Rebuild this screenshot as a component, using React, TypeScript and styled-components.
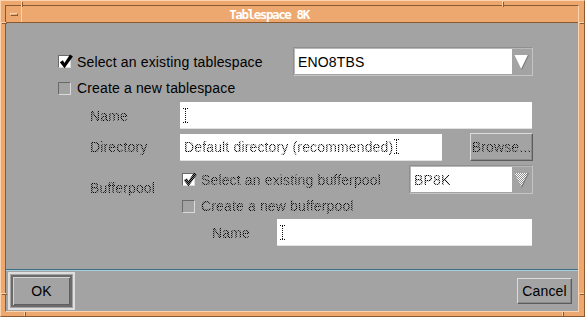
import styled, { createGlobalStyle, css } from "styled-components";

const GlobalStyle = createGlobalStyle`
  html, body {
    margin: 0;
    padding: 0;
    background: #a3a3a3;
  }
  body {
    font-family: "Liberation Sans", Arial, sans-serif;
    font-size: 14px;
    letter-spacing: 0.15px;
    color: #000;
  }
`;

const ORANGE = "#eda870";
const ORANGE_LIGHT = "#fbd3ae";
const ORANGE_DARK = "#8c5a30";
const GRAY = "#a3a3a3";

// Motif draws insensitive text as a 50% stipple
const stipple = css`
  color: transparent;
  background-image: repeating-conic-gradient(#000 0 25%, #959595 0 50%);
  background-size: 2px 2px;
  -webkit-background-clip: text;
  background-clip: text;
`;

const Window = styled.div`
  position: relative;
  width: 585px;
  height: 317px;
  box-sizing: border-box;
  background: ${ORANGE};
  border: 1px solid;
  border-color: ${ORANGE_LIGHT} ${ORANGE_DARK} ${ORANGE_DARK} ${ORANGE_LIGHT};
  padding: 4px 5px 4px 4px;
  display: flex;
`;

const Notch = styled.span<{ $vertical?: boolean }>`
  position: absolute;
  background: ${ORANGE_LIGHT};
  box-shadow: 1px 1px 0 ${ORANGE_DARK};
  width: ${(p) => (p.$vertical ? "1px" : "5px")};
  height: ${(p) => (p.$vertical ? "5px" : "1px")};
`;

const Frame = styled.div`
  flex: 1;
  display: flex;
  flex-direction: column;
  border: 1px solid;
  border-color: ${ORANGE_DARK} ${ORANGE_LIGHT} ${ORANGE_LIGHT} ${ORANGE_DARK};
`;

const TitleBar = styled.div`
  height: 16px;
  display: flex;
  border-bottom: 1px solid ${ORANGE_DARK};
`;

const MenuButton = styled.div`
  width: 15px;
  border-right: 1px solid ${ORANGE_LIGHT};
  display: flex;
  align-items: center;
  justify-content: center;
`;

const MenuBar = styled.span`
  width: 8px;
  height: 3px;
  box-sizing: border-box;
  border: 1px solid;
  border-color: ${ORANGE_LIGHT} ${ORANGE_DARK} ${ORANGE_DARK} ${ORANGE_LIGHT};
`;

const Title = styled.div`
  flex: 1;
  display: flex;
  align-items: center;
  justify-content: center;
  padding-right: 62px;
  font-family: "DejaVu Sans Mono", "Liberation Mono", monospace;
  font-weight: bold;
  font-size: 12.5px;
  letter-spacing: -1.4px;
  color: #fff;
`;

const Body = styled.div`
  flex: 1;
  background: ${GRAY};
  display: flex;
  flex-direction: column;
`;

const Form = styled.div`
  flex: 1;
  padding: 24px 0 0 52px;
  display: flex;
  flex-direction: column;
`;

const Row = styled.div<{ $top?: number; $height?: number; $indent?: number }>`
  display: flex;
  align-items: center;
  margin-top: ${(p) => p.$top ?? 0}px;
  height: ${(p) => (p.$height ? `${p.$height}px` : "auto")};
  padding-left: ${(p) => p.$indent ?? 0}px;
`;

const CheckOption = styled.label<{ $width?: number }>`
  display: flex;
  align-items: center;
  gap: 6px;
  width: ${(p) => (p.$width ? `${p.$width}px` : "auto")};
  white-space: nowrap;
`;

const OptionText = styled.span<{ $disabled?: boolean }>`
  ${(p) => p.$disabled && stipple}
`;

const Box = styled.span<{ $checked?: boolean }>`
  position: relative;
  width: 13px;
  height: 13px;
  box-sizing: border-box;
  border: 1px solid;
  border-color: #6a6a6a #dadada #dadada #6a6a6a;
  background: ${(p) => (p.$checked ? "#fff" : GRAY)};
  flex: none;

  svg {
    position: absolute;
    left: 0;
    top: -2px;
  }
`;

const Label = styled.span<{ $width: number }>`
  width: ${(p) => p.$width}px;
  flex: none;
  ${stipple}
`;

const Field = styled.div<{ $width: number; $height?: number }>`
  width: ${(p) => p.$width}px;
  height: ${(p) => p.$height ?? 27}px;
  box-sizing: border-box;
  background: #fff;
  border-bottom: 1px solid #e2e2e2;
  display: flex;
  align-items: center;
  padding-left: 3px;
  gap: 1px;
  white-space: nowrap;
`;

const FieldText = styled.span`
  padding-left: 1px;
  ${stipple}
  background-image: repeating-conic-gradient(#000 0 25%, #c8c8c8 0 50%);
`;

const Combo = styled.div<{ $width: number }>`
  width: ${(p) => p.$width}px;
  height: 29px;
  box-sizing: border-box;
  border: 1px solid;
  border-color: #8f8f8f #c4c4c4 #c4c4c4 #8f8f8f;
  box-shadow: inset 1px 1px 0 #b8b8b8;
  padding: 1px;
  display: flex;
  background: ${GRAY};
`;

const ComboValue = styled.div<{ $disabled?: boolean }>`
  flex: 1;
  background: #fff;
  display: flex;
  align-items: center;
  padding-left: 3px;

  span {
    ${(p) =>
      p.$disabled &&
      css`
        ${stipple}
        background-image: repeating-conic-gradient(#000 0 25%, #c8c8c8 0 50%);
      `}
  }
`;

const ComboArrow = styled.div`
  width: 19px;
  display: flex;
  align-items: center;
  justify-content: center;
`;

const Group = styled.div`
  display: flex;
  margin-top: 4px;
  padding-left: 32px;
`;

const GroupLabel = styled.div`
  width: 90px;
  height: 46px;
  display: flex;
  align-items: center;
  flex: none;

  span {
    ${stipple}
  }
`;

const GroupBody = styled.div`
  display: flex;
  flex-direction: column;
`;

const PushButton = styled.div<{ $width: number; $height: number; $disabled?: boolean }>`
  width: ${(p) => p.$width}px;
  height: ${(p) => p.$height}px;
  box-sizing: border-box;
  border: 1px solid;
  border-color: #dcdcdc #5c5c5c #5c5c5c #dcdcdc;
  box-shadow: inset -1px -1px 0 #8a8a8a;
  display: flex;
  align-items: center;
  justify-content: center;
  flex: none;

  span {
    ${(p) => p.$disabled && stipple}
  }
`;

const Separator = styled.div`
  border-top: 1px solid #3f6f80;
  border-bottom: 1px solid #a9cfdc;
`;

const Footer = styled.div`
  height: 40px;
  display: flex;
  align-items: center;
  justify-content: space-between;
  padding: 0 6px 0 2px;
`;

const DefaultRing = styled.div`
  width: 67px;
  height: 38px;
  box-sizing: border-box;
  border: 2px solid #dedede;
  padding: 1px;
  display: flex;
`;

const DefaultButton = styled.div`
  flex: 1;
  border: 2px solid #6b6b6b;
  box-shadow: inset 1px 1px 0 #d2d2d2, inset -1px -1px 0 #5e5e5e;
  display: flex;
  align-items: center;
  justify-content: center;
`;

const Spacer = styled.div<{ $width: number }>`
  width: ${(p) => p.$width}px;
  flex: none;
`;

function Checkbox({ checked, disabled, id }: { checked?: boolean; disabled?: boolean; id: string }) {
  return (
    <Box $checked={checked}>
      {checked && (
        <svg width="14" height="15" viewBox="0 0 14 15">
          {disabled && (
            <defs>
              <pattern id={id} width="2" height="2" patternUnits="userSpaceOnUse">
                <rect width="2" height="2" fill="#777" />
                <rect width="1" height="1" fill="#000" />
                <rect x="1" y="1" width="1" height="1" fill="#000" />
              </pattern>
            </defs>
          )}
          <path
            d="M0.8 8.3 L3.9 6.2 L5.4 8.9 L11 0.6 L13.9 2.4 L5.5 14.2 Z"
            fill={disabled ? `url(#${id})` : "#000"}
          />
        </svg>
      )}
    </Box>
  );
}

function Arrow({ disabled, id }: { disabled?: boolean; id: string }) {
  return (
    <svg width="15" height="16" viewBox="0 0 15 16">
      {disabled && (
        <defs>
          <pattern id={id} width="2" height="2" patternUnits="userSpaceOnUse">
            <rect width="2" height="2" fill="#fff" />
            <rect width="1" height="1" fill="#8c8c8c" />
            <rect x="1" y="1" width="1" height="1" fill="#8c8c8c" />
          </pattern>
        </defs>
      )}
      <polygon points="0.5,1 14.5,1 7.5,15.5" fill={disabled ? `url(#${id})` : "#fff"} />
      <line x1="14.5" y1="1" x2="7.5" y2="15.5" stroke="#7a7a7a" strokeWidth="1.2" />
    </svg>
  );
}

function Cursor() {
  return (
    <svg width="5" height="15" viewBox="0 0 5 15">
      <path d="M0 0.5H5M2.5 1V14M0 14.5H5" stroke="#111" strokeWidth="1" strokeDasharray="1 1" />
    </svg>
  );
}

export default function App() {
  return (
    <>
      <GlobalStyle />
      <Window>
        <Notch $vertical style={{ left: 20, top: 0 }} />
        <Notch $vertical style={{ left: 501, top: 0 }} />
        <Notch style={{ left: 0, top: 21 }} />
        <Notch style={{ right: 0, top: 21 }} />
        <Notch style={{ left: 0, top: 292 }} />
        <Notch style={{ right: 0, top: 292 }} />
        <Notch $vertical style={{ left: 23, bottom: 0 }} />
        <Notch $vertical style={{ left: 561, bottom: 0 }} />
        <Frame>
          <TitleBar>
            <MenuButton>
              <MenuBar />
            </MenuButton>
            <Title>Tablespace 8K</Title>
          </TitleBar>
          <Body>
            <Form>
              <Row $height={29}>
                <CheckOption $width={235}>
                  <Checkbox checked id="c1" />
                  <OptionText>Select an existing tablespace</OptionText>
                </CheckOption>
                <Combo $width={240}>
                  <ComboValue>
                    <span>ENO8TBS</span>
                  </ComboValue>
                  <ComboArrow>
                    <Arrow id="a1" />
                  </ComboArrow>
                </Combo>
              </Row>
              <Row $top={4} $height={16}>
                <CheckOption>
                  <Checkbox id="c2" />
                  <OptionText>Create a new tablespace</OptionText>
                </CheckOption>
              </Row>
              <Row $top={6} $indent={32}>
                <Label $width={90}>Name</Label>
                <Field $width={352}>
                  <Cursor />
                </Field>
              </Row>
              <Row $top={4} $indent={32}>
                <Label $width={90}>Directory</Label>
                <Field $width={262}>
                  <FieldText>Default directory (recommended)</FieldText>
                  <Cursor />
                </Field>
                <Spacer $width={28} />
                <PushButton $width={63} $height={28} $disabled>
                  <span>Browse...</span>
                </PushButton>
              </Row>
              <Group>
                <GroupLabel>
                  <span>Bufferpool</span>
                </GroupLabel>
                <GroupBody>
                  <Row $height={29} $indent={2}>
                    <CheckOption $width={227}>
                      <Checkbox checked disabled id="c3" />
                      <OptionText $disabled>Select an existing bufferpool</OptionText>
                    </CheckOption>
                    <Combo $width={124}>
                      <ComboValue $disabled>
                        <span>BP8K</span>
                      </ComboValue>
                      <ComboArrow>
                        <Arrow disabled id="a2" />
                      </ComboArrow>
                    </Combo>
                  </Row>
                  <Row $top={4} $height={16} $indent={2}>
                    <CheckOption>
                      <Checkbox id="c4" />
                      <OptionText $disabled>Create a new bufferpool</OptionText>
                    </CheckOption>
                  </Row>
                  <Row $top={5} $indent={32}>
                    <Label $width={65}>Name</Label>
                    <Field $width={255}>
                      <Cursor />
                    </Field>
                  </Row>
                </GroupBody>
              </Group>
            </Form>
            <Separator />
            <Footer>
              <DefaultRing>
                <DefaultButton>OK</DefaultButton>
              </DefaultRing>
              <PushButton $width={55} $height={26}>
                <span>Cancel</span>
              </PushButton>
            </Footer>
          </Body>
        </Frame>
      </Window>
    </>
  );
}
